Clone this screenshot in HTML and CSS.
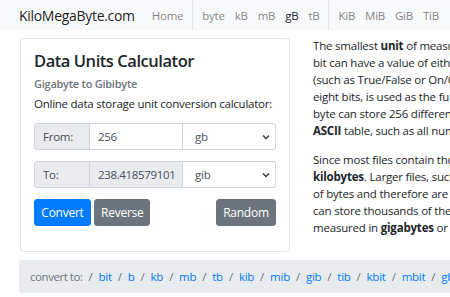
FILE: index.html
```html
<!DOCTYPE html>
<html lang="en">
<head>
<meta charset="utf-8">
<title>Gigabyte to Gibibyte - KiloMegaByte.com</title>
<link rel="stylesheet" href="styles.css">
</head>
<body>
<nav class="navbar">
  <a class="brand" href="#">KiloMegaByte.com</a>
  <div class="nav-group first">
    <a class="nav-link" href="#">Home</a>
  </div>
  <div class="nav-group">
    <a class="nav-link" href="#">byte</a>
    <a class="nav-link" href="#">kB</a>
    <a class="nav-link" href="#">mB</a>
    <a class="nav-link active" href="#">gB</a>
    <a class="nav-link" href="#">tB</a>
  </div>
  <div class="nav-group">
    <a class="nav-link" href="#">KiB</a>
    <a class="nav-link" href="#">MiB</a>
    <a class="nav-link" href="#">GiB</a>
    <a class="nav-link" href="#">TiB</a>
  </div>
</nav>

<main class="container">
  <div class="row">
    <section class="card">
      <h1 class="card-title">Data Units Calculator</h1>
      <h2 class="card-subtitle">Gigabyte to Gibibyte</h2>
      <p class="card-text">Online data storage unit conversion calculator:</p>

      <div class="input-group">
        <span class="addon">From:</span>
        <input class="field" type="text" value="256">
        <div class="select-wrap">
          <select class="select"><option>gb</option></select>
          <svg class="chev" width="8" height="6" viewBox="0 0 8 6"><path d="M1 1.5 L4 4.5 L7 1.5" fill="none" stroke="#343a40" stroke-width="1.4"/></svg>
        </div>
      </div>

      <div class="input-group">
        <span class="addon">To:</span>
        <input class="field readonly" type="text" value="238.418579101" readonly>
        <div class="select-wrap">
          <select class="select"><option>gib</option></select>
          <svg class="chev" width="8" height="6" viewBox="0 0 8 6"><path d="M1 1.5 L4 4.5 L7 1.5" fill="none" stroke="#343a40" stroke-width="1.4"/></svg>
        </div>
      </div>

      <div class="buttons">
        <button class="btn btn-primary">Convert</button>
        <button class="btn btn-secondary">Reverse</button>
        <button class="btn btn-secondary push">Random</button>
      </div>
    </section>

    <article class="content">
      <p>The smallest <b>unit</b> of measurement used for measuring data is a bit. A single<br>
      bit can have a value of either zero or one. It may contain a binary value<br>
      (such as True/False or On/Off or 1/0) and nothing more. Therefore, a byte, or<br>
      eight bits, is used as the fundamental unit of measurement for data storage. A<br>
      byte can store 256 different values, which is sufficient to represent standard<br>
      <b>ASCII</b> table, such as all numbers, letters and control symbols.</p>
      <p>Since most files contain thousands of bytes, file sizes are often measured in<br>
      <b>kilobytes</b>. Larger files, such as images, videos, and audio files, contain millions<br>
      of bytes and therefore are measured in megabytes. Modern storage devices<br>
      can store thousands of these files, which is why storage capacity is typically<br>
      measured in <b>gigabytes</b> or even terabytes.</p>
    </article>
  </div>

  <nav class="breadcrumb">
    <span class="crumb label">convert to:</span>
    <a class="crumb" href="#">bit</a>
    <a class="crumb" href="#">b</a>
    <a class="crumb" href="#">kb</a>
    <a class="crumb" href="#">mb</a>
    <a class="crumb" href="#">tb</a>
    <a class="crumb" href="#">kib</a>
    <a class="crumb" href="#">mib</a>
    <a class="crumb" href="#">gib</a>
    <a class="crumb" href="#">tib</a>
    <a class="crumb" href="#">kbit</a>
    <a class="crumb" href="#">mbit</a>
    <a class="crumb" href="#">gbit</a>
    <a class="crumb" href="#">tbit</a>
  </nav>
</main>
</body>
</html>
```

FILE: styles.css
```css
html, body {
  overflow: hidden;
}
body {
  margin: 0;
  font-family: "Open Sans", "Noto Sans", sans-serif;
  font-size: 11.5px;
  letter-spacing: -0.25px;
  line-height: 17px;
  color: #212529;
  background: #fff;
}
a { text-decoration: none; }

.navbar {
  display: flex;
  align-items: stretch;
  height: 30px;
  background: #f8f9fa;
  padding-left: 19px;
  white-space: nowrap;
}
.brand {
  display: flex;
  align-items: center;
  font-size: 14px;
  letter-spacing: -0.3px;
  color: rgba(0,0,0,.9);
  margin-right: 8px;
}
.nav-group {
  display: flex;
  align-items: center;
  padding: 0 4px 5px;
  border-right: 1px solid #e3e6e9;
}
.nav-group:last-child { border-right: none; }
.nav-link {
  padding: 5px 5px 0;
  color: rgba(0,0,0,.5);
}
.nav-link.active { color: rgba(0,0,0,.9); }

.container {
  width: 900px;
  padding: 8px 0 0 20px;
}
.row {
  display: flex;
  gap: 23px;
  align-items: flex-start;
}
.card {
  flex: 0 0 270px;
  box-sizing: border-box;
  height: 214px;
  border: 1px solid #e4e6e8;
  border-radius: 3px;
  padding: 11px 13px 0;
}
.card-title {
  margin: 0;
  font-size: 16.5px;
  letter-spacing: -0.45px;
  line-height: 22px;
  font-weight: 600;
}
.card-subtitle {
  margin: 3px 0 0;
  font-size: 11px;
  line-height: 17px;
  font-weight: 600;
  color: #6c757d;
}
.card-text {
  margin: 3px 0 11px;
}
.input-group {
  display: flex;
  height: 27px;
  margin-bottom: 11px;
}
.addon {
  box-sizing: border-box;
  width: 56px;
  display: flex;
  align-items: center;
  padding-left: 8px;
  background: #e9ecef;
  border: 1px solid #ced4da;
  border-radius: 3px 0 0 3px;
  color: #495057;
}
.field {
  box-sizing: border-box;
  width: 93px;
  height: 27px;
  margin: 0;
  border: 1px solid #ced4da;
  border-left: none;
  padding: 0 3px 0 8px;
  font: inherit;
  letter-spacing: -0.35px;
  color: #495057;
  background: #fff;
  outline: none;
}
.field.readonly { background: #e9ecef; }
.select-wrap {
  position: relative;
  width: 93px;
}
.select {
  appearance: none;
  -webkit-appearance: none;
  box-sizing: border-box;
  width: 100%;
  height: 27px;
  margin: 0;
  border: 1px solid #ced4da;
  border-left: none;
  border-radius: 0 3px 3px 0;
  padding: 0 8px 0 12px;
  font: inherit;
  letter-spacing: inherit;
  color: #495057;
  background: #fff;
}
.chev {
  position: absolute;
  right: 6px;
  top: 11px;
}
.buttons {
  display: flex;
  gap: 3px;
}
.btn {
  height: 27px;
  padding: 0 6px;
  border: 1px solid transparent;
  border-radius: 3px;
  font: inherit;
  font-size: 12px;
  letter-spacing: inherit;
  color: #fff;
}
.btn-primary { background: #007bff; border-color: #007bff; width: 57px; }
.btn-secondary { background: #6c757d; border-color: #6c757d; width: 56px; }
.push { margin-left: auto; width: 60px; }

.content {
  flex: 1;
  margin-top: -1px;
  white-space: nowrap;
  letter-spacing: -0.2px;
}
.content p {
  margin: 0 0 11.5px;
}

.breadcrumb {
  display: flex;
  align-items: center;
  height: 33px;
  margin: 8px 0 0 -1px;
  padding-left: 11px;
  background: #e9ecef;
  border-radius: 3px;
  white-space: nowrap;
}
.crumb { color: #007bff; }
.crumb.label { color: #6c757d; letter-spacing: -0.45px; }
.crumb + .crumb::before {
  content: "/";
  color: #6c757d;
  padding: 0 6px;
}
```
